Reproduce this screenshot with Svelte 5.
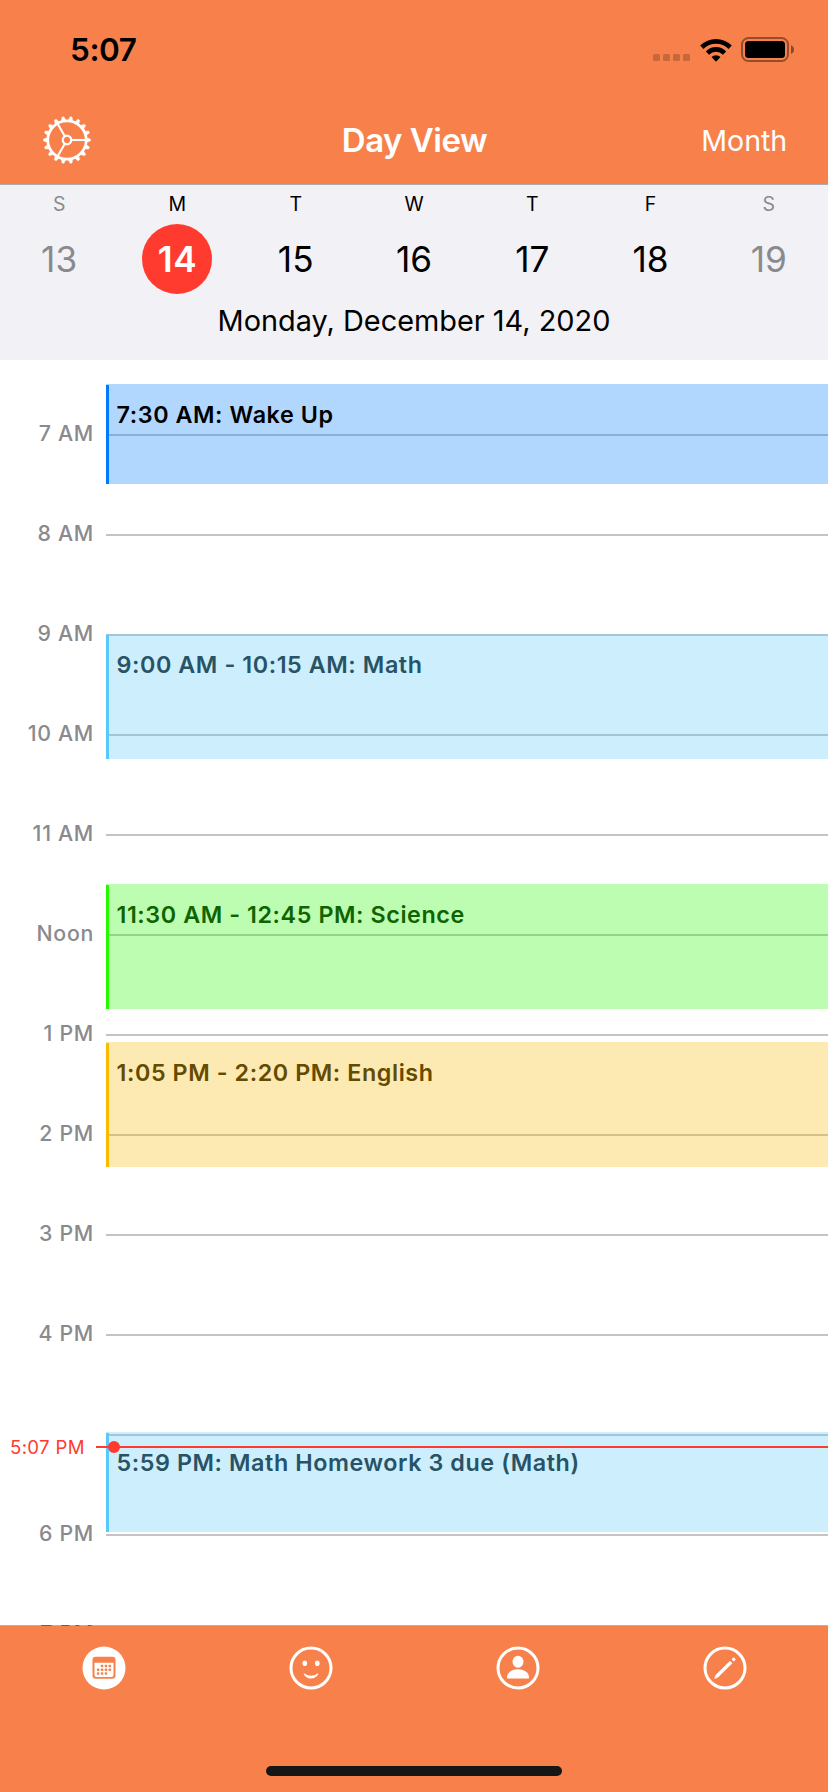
<script>
  const week = [
    { letter: 'S', day: 13, weekend: true },
    { letter: 'M', day: 14, selected: true },
    { letter: 'T', day: 15 },
    { letter: 'W', day: 16 },
    { letter: 'T', day: 17 },
    { letter: 'F', day: 18 },
    { letter: 'S', day: 19, weekend: true }
  ];

  const hours = ['7 AM', '8 AM', '9 AM', '10 AM', '11 AM', 'Noon', '1 PM', '2 PM', '3 PM', '4 PM', '', '6 PM', '7 PM'];

  // top and height are in pixels inside the timeline, 100px per hour
  const events = [
    { title: '7:30 AM: Wake Up', top: 24, height: 100, tone: 'blue' },
    { title: '9:00 AM - 10:15 AM: Math', top: 274, height: 125, tone: 'sky' },
    { title: '11:30 AM - 12:45 PM: Science', top: 524, height: 125, tone: 'green' },
    { title: '1:05 PM - 2:20 PM: English', top: 682, height: 125, tone: 'yellow' },
    { title: '5:59 PM: Math Homework 3 due (Math)', top: 1072, height: 100, tone: 'sky' }
  ];

  const teeth = Array.from({ length: 18 }, (_, i) => i * 20);
  const calendarDots = [
    [1, 0], [2, 0], [3, 0],
    [0, 1], [1, 1], [2, 1], [3, 1],
    [0, 2], [1, 2], [2, 2]
  ];
</script>

<div class="screen">
  <header>
    <div class="status">
      <span class="clock">5:07</span>
      <div class="indicators">
        <div class="signal"><i></i><i></i><i></i><i></i></div>
        <svg class="wifi" width="34" height="26" viewBox="0 0 34 26">
          <path d="M1.2 8.6 A22.3 22.3 0 0 1 32.8 8.6 L29.6 11.9 A17.8 17.8 0 0 0 4.4 11.9 Z" />
          <path d="M6.8 14.4 A14.3 14.3 0 0 1 27.2 14.4 L23.9 17.7 A9.8 9.8 0 0 0 10.1 17.7 Z" />
          <path d="M12.5 20.1 A6.4 6.4 0 0 1 21.5 20.1 L17 24.7 Z" />
        </svg>
        <svg class="battery" width="54" height="26" viewBox="0 0 54 26">
          <rect x="1" y="1" width="46" height="23" rx="6.5" fill="none" stroke="#000" stroke-opacity=".4" stroke-width="2" />
          <rect x="4" y="4" width="40" height="17" rx="3.5" />
          <path d="M50 8.2 C54 9.5 54 15.5 50 16.8 Z" fill-opacity=".45" />
        </svg>
      </div>
    </div>
    <nav>
      <svg class="gear" width="50" height="50" viewBox="-25 -25 50 50">
        <circle r="19.2" fill="none" stroke="#fff" stroke-width="2.7" />
        {#each teeth as angle}
          <path d="M20 -2.1 L23.5 -1 V1 L20 2.1 Z" fill="#fff" stroke="#fff" stroke-width=".4" stroke-linejoin="round" transform="rotate({angle})" />
        {/each}
        <circle r="4.3" fill="none" stroke="#fff" stroke-width="2.2" />
        {#each [0, 120, 240] as angle}
          <path d="M5 0 H19" stroke="#fff" stroke-width="2.1" transform="rotate({angle})" />
        {/each}
      </svg>
      <h1>Day View</h1>
      <span class="month">Month</span>
    </nav>
  </header>

  <section class="week">
    <div class="days">
      {#each week as d}
        <div class="day" class:weekend={d.weekend} class:selected={d.selected}>
          <span class="letter">{d.letter}</span>
          <span class="number">{d.day}</span>
        </div>
      {/each}
    </div>
    <p class="date">Monday, December 14, 2020</p>
  </section>

  <main>
    <div class="hours">
      {#each hours as h}
        <div class="hour"><span class="label">{h}</span><span class="rule"></span></div>
      {/each}
    </div>
    {#each events as e}
      <article class="event {e.tone}" style="top:{e.top}px;height:{e.height}px">
        <span>{e.title}</span>
      </article>
    {/each}
    <div class="now">
      <span class="now-label">5:07 PM</span>
      <span class="now-line"></span>
    </div>
  </main>

  <footer>
    <div class="tabs">
      <svg width="44" height="44" viewBox="-22 -22 44 44">
        <circle r="21.5" fill="#fff" />
        <rect x="-11.5" y="-11.2" width="23" height="22" rx="3.2" fill="#f8814b" />
        <path d="M-9.5 -5.2 H9.5 V7 Q9.5 8.9 7.6 8.9 H-7.6 Q-9.5 8.9 -9.5 7 Z" fill="#fff" />
        {#each calendarDots as [cx, cy]}
          <rect x={-7.1 + cx * 3.9} y={-3.3 + cy * 3.8} width="2.5" height="2.5" rx=".7" fill="#f8814b" />
        {/each}
      </svg>
      <svg width="44" height="44" viewBox="-22 -22 44 44">
        <circle r="20" fill="none" stroke="#fff" stroke-width="3" />
        <ellipse cx="-6.2" cy="-4.7" rx="2.3" ry="2.8" fill="#fff" />
        <ellipse cx="6.3" cy="-4.7" rx="2.3" ry="2.8" fill="#fff" />
        <path d="M-7.4 5.8 C-6.8 5 -6.2 5.6 -5.6 6 C-2.4 8.3 2.4 8.3 5.6 6 C6.2 5.6 6.8 5 7.4 5.8 C6.2 8.8 3.4 10.6 0 10.6 C-3.4 10.6 -6.2 8.8 -7.4 5.8 Z" fill="#fff" />
      </svg>
      <svg width="44" height="44" viewBox="-22 -22 44 44">
        <circle r="20" fill="none" stroke="#fff" stroke-width="3" />
        <ellipse cy="-6.3" rx="5.5" ry="6" fill="#fff" />
        <path d="M-11 9.4 C-11 5 -6.8 1.3 0 1.3 C6.8 1.3 11 5 11 9.4 Q11 10.6 9.8 10.6 H-9.8 Q-11 10.6 -11 9.4 Z" fill="#fff" />
      </svg>
      <svg width="44" height="44" viewBox="-22 -22 44 44">
        <circle r="20" fill="none" stroke="#fff" stroke-width="3" />
        <path d="M-10.3 10.5 L-9 6.9 L5 -6.7 L7 -4.7 L-6.9 9 Z" fill="#fff" stroke="#fff" stroke-width=".7" stroke-linejoin="round" />
        <rect x="-1.6" y="-1.6" width="3.2" height="3.2" rx="1" fill="#fff" transform="translate(8.7 -8.6) rotate(-45)" />
      </svg>
    </div>
    <div class="home"></div>
  </footer>
</div>

<style>
  :global(body) {
    margin: 0;
    background: #fff;
  }
  .screen {
    width: 828px;
    height: 1792px;
    display: flex;
    flex-direction: column;
    overflow: hidden;
    background: #fff;
    color: #000;
    font-family: Inter, 'Liberation Sans', sans-serif;
    white-space: nowrap;
  }
  header {
    box-sizing: border-box;
    height: 185px;
    flex: none;
    background: #f8814b;
    border-bottom: 1px solid #acabad;
  }
  .status {
    height: 96px;
    display: flex;
    justify-content: space-between;
    padding: 0 33px 0 70px;
  }
  .clock {
    font-size: 31.5px;
    font-weight: 600;
    line-height: 100px;
    letter-spacing: -0.4px;
  }
  .indicators {
    display: flex;
    align-items: flex-start;
    padding-top: 37px;
  }
  .signal {
    display: flex;
    gap: 3px;
    padding-top: 17px;
    margin-right: 9px;
  }
  .signal i {
    width: 7px;
    height: 7px;
    border-radius: 1.5px;
    background: rgba(0, 0, 0, 0.2);
  }
  .battery {
    margin-left: 8px;
  }
  nav {
    height: 88px;
    display: grid;
    grid-template-columns: 1fr auto 1fr;
    align-items: center;
    padding: 0 41px 0 42px;
    color: #fff;
  }
  .gear {
    display: block;
  }
  h1 {
    margin: 0;
    font-size: 33px;
    font-weight: 600;
    line-height: 88px;
    letter-spacing: -0.5px;
  }
  .month {
    justify-self: end;
    font-size: 28.6px;
    line-height: 87px;
    padding-top: 1px;
    letter-spacing: -0.1px;
  }
  .week {
    height: 175px;
    flex: none;
    background: #f2f1f6;
  }
  .days {
    display: grid;
    grid-template-columns: repeat(7, 1fr);
  }
  .day {
    display: flex;
    flex-direction: column;
    align-items: center;
  }
  .letter {
    font-size: 19.5px;
    line-height: 39px;
  }
  .number {
    width: 70px;
    height: 70px;
    border-radius: 50%;
    font-size: 35.2px;
    line-height: 70px;
    text-align: center;
    letter-spacing: 0;
  }
  .weekend {
    color: #8a8a8e;
  }
  .selected .number {
    background: #ff3b30;
    color: #fff;
    font-weight: 600;
    letter-spacing: 0.6px;
  }
  .date {
    margin: 0;
    font-size: 28.9px;
    line-height: 54px;
    text-align: center;
  }
  main {
    position: relative;
    height: 1266px;
    flex: none;
    overflow: hidden;
  }
  .hours {
    padding-top: 25px;
  }
  .hour {
    height: 100px;
    display: grid;
    grid-template-columns: 94px 1fr;
    column-gap: 12px;
    align-items: center;
  }
  .label {
    font-size: 21.3px;
    font-weight: 500;
    color: #8a8a8e;
    text-align: right;
    line-height: 26px;
    padding-bottom: 4px;
    letter-spacing: 0.7px;
  }
  .rule {
    height: 2px;
    background: #c4c4c6;
  }
  .event {
    position: absolute;
    left: 106px;
    right: 0;
    box-sizing: border-box;
    padding-left: 10.5px;
    font-size: 23.3px;
    font-weight: 600;
    letter-spacing: 0.58px;
    line-height: 61px;
  }
  .event::before {
    content: '';
    position: absolute;
    left: 0;
    top: 1px;
    bottom: 0;
    width: 3px;
    background: var(--bar);
  }
  .blue {
    --bar: #007aff;
    background: rgba(0, 122, 255, 0.3);
  }
  .sky {
    --bar: #5ac8fa;
    background: rgba(90, 200, 250, 0.3);
    color: #285365;
  }
  .green {
    --bar: #24f900;
    background: rgba(36, 249, 0, 0.3);
    color: #0f6400;
  }
  .yellow {
    --bar: #f9ba00;
    background: rgba(249, 186, 0, 0.3);
    color: #644b00;
  }
  .now {
    position: absolute;
    left: 10px;
    right: 0;
    top: 1075px;
    height: 24px;
    display: flex;
    align-items: center;
    color: #ff3b30;
  }
  .now-label {
    width: 86px;
    font-size: 18.6px;
    line-height: 24px;
    letter-spacing: 0.35px;
  }
  .now-line {
    position: relative;
    flex: 1;
    height: 2px;
    background: #ff3b30;
  }
  .now-line::before {
    content: '';
    position: absolute;
    left: 12px;
    top: -5px;
    width: 12px;
    height: 12px;
    border-radius: 50%;
    background: #ff3b30;
  }
  footer {
    position: relative;
    height: 166px;
    flex: none;
    background: #f8814b;
    display: flex;
    flex-direction: column;
    align-items: center;
    justify-content: space-between;
  }
  footer::before {
    content: '';
    position: absolute;
    left: 0;
    right: 0;
    top: -1px;
    height: 1px;
    background: rgba(0, 0, 0, 0.3);
  }
  .tabs {
    width: 828px;
    display: grid;
    grid-template-columns: repeat(4, 1fr);
    justify-items: center;
    padding-top: 20px;
  }
  .home {
    width: 296px;
    height: 10px;
    border-radius: 5px;
    background: #161616;
    margin-bottom: 16px;
  }
</style>
